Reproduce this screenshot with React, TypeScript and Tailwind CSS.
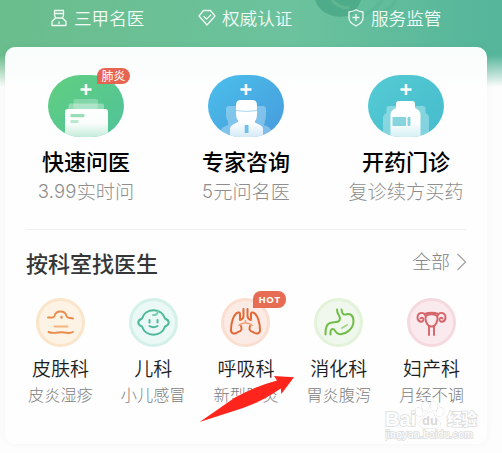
import type { ReactNode } from "react";

const badgeItems = [
  {
    label: "三甲名医",
    icon: (
      <>
        <path d="M4 1.5h9v4.500l-1 3h-7l-1-3zM4 4.500h9M5 9l-3.500 3.500v4h14v-4L12 9" />
        <path d="M8.500 12.500v2.500" />
      </>
    ),
    box: "w-[148px]",
  },
  {
    label: "权威认证",
    icon: <path d="M5 1.500h7l4.500 5.500-8 9-8-9zM5.200 7.200l2.800 2.900 4.500-4.300" />,
    box: "w-[149px]",
  },
  {
    label: "服务监管",
    icon: <path d="M8.500 .8c2.200 1.400 4.400 2 7 2.200v6c0 3.700-3 6-7 7.800-4-1.800-7-4.100-7-7.800V3c2.600-.2 4.800-.8 7-2.200zM8.500 5v7M5 8.500h7" />,
    box: "",
  },
];

const Oval = ({ id, from, to, children }: { id: string; from: string; to: string; children: ReactNode }) => (
  <svg width="76" height="62" viewBox="0 0 76 62">
    <defs>
      <linearGradient id={`${id}-bg`} x1="0" y1="0" x2="1" y2="1">
        <stop stopColor={from} />
        <stop offset="1" stopColor={to} />
      </linearGradient>
      <linearGradient id={`${id}-fade`} gradientUnits="userSpaceOnUse" x1="0" y1="32" x2="0" y2="64">
        <stop stopColor="#fff" />
        <stop offset=".5" stopColor="#fff" stopOpacity=".97" />
        <stop offset="1" stopColor="#fff" stopOpacity=".62" />
      </linearGradient>
      <clipPath id={`${id}-clip`}>
        <rect width="76" height="62" rx="33" ry="31" />
      </clipPath>
    </defs>
    <g clipPath={`url(#${id}-clip)`}>
      <rect width="76" height="62" fill={`url(#${id}-bg)`} />
      <path d="M38 9v11M32.500 14.500h11" stroke="#fff" strokeWidth="2.600" />
      {children}
    </g>
  </svg>
);

const services = [
  {
    title: "快速问医",
    number: "3.99",
    sub: "实时问",
    icon: (
      <Oval id="ask" from="#61cf80" to="#50c29a">
        <rect x="25.500" y="24" width="24.500" height="10" rx="2" fill="#fff" opacity=".25" />
        <rect x="20.500" y="28.500" width="35.500" height="10" rx="2" fill="#fff" opacity=".35" />
        <rect x="17" y="34" width="43" height="34" rx="3" fill="url(#ask-fade)" />
        <rect x="22.500" y="39" width="14" height="3.200" rx=".8" fill="#98dfb7" />
        <rect x="22.500" y="45" width="8" height="3" rx=".8" fill="#b8e9cf" />
      </Oval>
    ),
  },
  {
    title: "专家咨询",
    number: "5",
    sub: "元问名医",
    icon: (
      <Oval id="expert" from="#4bbfeb" to="#479bdc">
        <path d="M21 31h34q3 0 3 3v6q0 4-1 6l-1 4q7 2 7 6v6H13v-6q0-4 7-6v-4q-2-2-2-6v-6q0-3 3-3z" fill="#fff" opacity=".3" />
        <path d="M28 30q0-5 5-5h11q5 0 5 5v9q0 5-2 7v1.500l3 1.500q5 2 5 5v8H22v-8q0-3 4-5l4-2v-1.500q-2-2-2-6.500z" fill="url(#expert-fade)" />
        <path d="M28 35.500q10.500 2 21 0" stroke="#a5d5f3" strokeWidth="1" fill="none" />
        <rect x="36.700" y="50" width="3.800" height="8" fill="#72bde9" />
      </Oval>
    ),
  },
  {
    title: "开药门诊",
    number: "",
    sub: "复诊续方买药",
    icon: (
      <Oval id="clinic" from="#54cbd3" to="#46bbcd">
        <path d="M21 31h34q2.500 0 2.500 2.500V38q3.500 1.500 3.500 5v20H15V43q0-3.500 3.500-5v-4.500q0-2.500 2.500-2.500z" fill="#fff" opacity=".32" />
        <path d="M28 29q0-3 3-3h13q3 0 3 3v4q5 2 5.500 6v25H22.500V39q.5-4 5.500-6z" fill="url(#clinic-fade)" />
        <rect x="24.500" y="42" width="13.500" height="9" fill="#85d4de" />
        <rect x="39.500" y="42" width="3" height="9" rx="1" fill="#85d4de" />
      </Oval>
    ),
  },
];

const departments = [
  {
    name: "皮肤科",
    sub: "皮炎湿疹",
    circle: "border-[#fbe5ca] bg-[#fdf3e4]",
    icon: (
      <g stroke="#e98b4c" strokeWidth="1.900">
        <path d="M12 19.500h4.500q1.500 0 2-1.500c1.500-6 10.500-6 12 0q.5 1.500 2 1.700l4.500.8" />
        <path d="M12.500 34q3 1.200 7 .7 6-1 11 0 4 .7 6.500-.7" />
        <path d="M18.500 28.500h13" stroke="#f4b581" />
        <path d="M25.500 19v.5" strokeWidth="2.400" />
      </g>
    ),
  },
  {
    name: "儿科",
    sub: "小儿感冒",
    circle: "border-[#d3f1e8] bg-[#eaf8f6]",
    icon: (
      <g stroke="#4dba99" strokeWidth="2">
        <path d="M13 20.500c3-11 20-11 23 0 5 2 5 6 0 8-4 11-19 11-23 0-5-2-5-6 0-8z" />
        <path d="M20.500 22v2.500M28.500 22v2.500M20.500 28q4 2.500 8 0" />
        <path d="M29 13c0 2.500-2 4.500-5 4" stroke="#78cfb4" />
      </g>
    ),
  },
  {
    name: "呼吸科",
    sub: "新型肺炎",
    circle: "border-[#fadfd1] bg-[#fcebe4]",
    icon: (
      <g stroke="#e26936" strokeWidth="2">
        <path d="M22.500 11v7q0 3-3.500 4M26.500 11v7q0 3 3.500 4M19 21v-5q0-2-2-1.500c-5 2-7 11-7 17.500 0 4 4 4.500 7 2 4-1 4-3 3-6M30 21v-5q0-2 2-1.500c5 2 7 11 7 17.500 0 4-4 4.500-7 2-4-1-4-3-3-6" />
        <path d="M18 27.500q2-2.500 6.500-2.500t6.500 2.500M24.500 22.500v2.500" stroke="#f0a17c" strokeWidth="1.600" />
      </g>
    ),
  },
  {
    name: "消化科",
    sub: "胃炎腹泻",
    circle: "border-[#e3f3da] bg-[#f0f8ed]",
    icon: (
      <g stroke="#71bd49" strokeWidth="2">
        <path d="M23 11.500c0 5 3 6 3 9 0 4-4 3.500-8 4-5 .5-6.500 4-6.500 12M27.500 11.500c.5 4 1.500 5.500 4 5 5-1.500 8 1 8 6.500 0 8-8 14-14.500 13-4-1-4-5-6-5-2.500 0-2.500 2-2.500 5.500" />
        <path d="M28 30l5-3" stroke="#a4d58b" />
      </g>
    ),
  },
  {
    name: "妇产科",
    sub: "月经不调",
    circle: "border-[#f5d9de] bg-[#faeaed]",
    icon: (
      <g stroke="#d5656b" strokeWidth="1.900">
        <path d="M22 37v-9q-3.500-3-3.500-8c0-5 12-5 12 0q0 5-3.500 8v9" />
        <path d="M18.500 18c-1.500-4.500-7.500-4-8 1-.3 5 5 6 6 3 .3-2-2-3-3-1.500M30.500 18c1.500-4.500 7.500-4 8 1 .3 5-5 6-6 3-.3-2 2-3 3-1.500" />
        <path d="M17.500 16q7-2.500 14 0" />
        <path d="M22 28q2.500 1 5 0" />
      </g>
    ),
  },
];

export default function App() {
  return (
    <div className="relative h-[453px] w-[502px] overflow-hidden bg-[linear-gradient(180deg,transparent_55px,#fdfdfd_87px),linear-gradient(95deg,#6abd8c_0%,#6bc29d_55%,#50b39a_100%)] font-['Noto_Sans_CJK_SC',sans-serif]">
      <svg className="absolute left-[310px] top-0" width="130" height="20" fill="none">
        <path d="M5 0C9 12 22 19 37 16c7-2 11-8 14-16z" fill="#4fac8a" />
        <path d="M22 0c4 5 10 8 17 8" stroke="#5fb690" strokeWidth="3" />
        <path d="M49 17C61 13 68 7 72 0M63 17C76 13 82 7 86 0" stroke="#58b492" strokeWidth="4" opacity=".6" />
      </svg>

      <header className="relative flex h-[47px] pl-[50px] pt-[5px] text-white/90">
        {badgeItems.map((item) => (
          <div key={item.label} className={`flex h-[26px] items-center gap-[6px] ${item.box}`}>
            <svg width="18" height="18" viewBox="0 0 17 18" fill="none" stroke="currentColor" strokeWidth="1.300" strokeLinejoin="round">
              {item.icon}
            </svg>
            <span className="whitespace-nowrap text-[17.600px] font-[350] leading-[24px]">{item.label}</span>
          </div>
        ))}
      </header>

      <main className="relative ml-[5px] h-[397px] w-[482px] rounded-[10px] bg-[linear-gradient(180deg,#f9fdfc_0px,#fafdfc_20px,#fefefe_42px)] shadow-[0_0_10px_rgba(0,0,0,0.035)]">
        <section className="grid grid-cols-[160px_160px_160px] pl-px pt-7">
          {services.map((s) => (
            <div key={s.title} className="flex flex-col items-center">
              {s.icon}
              <h2 className="mt-[8px] whitespace-nowrap text-[22px] font-medium leading-[30px] text-black">{s.title}</h2>
              <p className="mt-[2px] flex whitespace-nowrap text-[19.200px] font-light leading-[28px] text-[#8e8e8e]">
                {s.number && <span className="font-['Inter',sans-serif] text-[18.500px] tracking-[0.2px]">{s.number}</span>}
                {s.sub}
              </p>
            </div>
          ))}
        </section>

        <hr className="mx-[21px] mt-[24px] border-[#f0f0f0]" />

        <div className="flex h-[66px] items-center justify-between pb-[3px] pl-[21px] pr-5">
          <h3 className="text-[22px] font-medium leading-[32px] text-[#363636]">按科室找医生</h3>
          <a className="flex items-center gap-[6px] text-[19px] font-light text-[#858585]">
            全部
            <svg width="11" height="18" fill="none" stroke="#a5a5a5" strokeWidth="1.300">
              <path d="M1.500 1l8 8-8 8" />
            </svg>
          </a>
        </div>

        <section className="ml-[9px] grid w-[464px] grid-cols-5 pt-[2px]">
          {departments.map((d) => (
            <div key={d.name} className="flex flex-col items-center">
              <div className={`flex h-[49px] w-[49px] items-center justify-center rounded-full border-[3px] ${d.circle}`}>
                <svg className="shrink-0" width="49" height="49" viewBox="0 0 49 49" fill="none" strokeLinecap="round" strokeLinejoin="round">
                  {d.icon}
                </svg>
              </div>
              <h4 className="mt-[7px] whitespace-nowrap text-[19px] font-[350] leading-[28px] text-[#1d1d1d]">{d.name}</h4>
              <p className="whitespace-nowrap text-[16.200px] font-light leading-[24px] text-[#808080]">{d.sub}</p>
            </div>
          ))}
        </section>
      </main>

      <span className="absolute left-[97px] top-[68px] flex h-[16px] w-[33px] items-center justify-center rounded-[8px] rounded-bl-none bg-[#e66552] text-[12px] leading-none text-white">肺炎</span>
      <span className="absolute left-[253px] top-[291px] flex h-[17px] w-[33px] items-center justify-center rounded-[8px] rounded-bl-none bg-[#e66c54] font-['Open_Sans',sans-serif] text-[9.500px] font-bold leading-none tracking-[0.500px] text-white">HOT</span>

      <svg className="absolute left-[385px] top-[397px]" width="100" height="50" fill="#fff" stroke="#dcdcdc" strokeWidth="1.600" paintOrder="stroke">
        <g strokeWidth="1">
          <ellipse cx="34" cy="15" rx="3.500" ry="4.500" transform="rotate(-25 34 15)" />
          <ellipse cx="40.500" cy="9" rx="3.500" ry="4.800" />
          <ellipse cx="49" cy="9" rx="3.500" ry="4.800" />
          <ellipse cx="55" cy="15" rx="3.500" ry="4.500" transform="rotate(25 55 15)" />
          <path d="M45 15c-4 0-5 4-9 8-4 4-1 8 4 8h10c5 0 7-5 3-8-4-3-4-8-8-8z" />
        </g>
        <text x="0" y="29" className="font-['Liberation_Sans',sans-serif] text-[20px] font-bold">Bai</text>
        <text x="37" y="28" className="font-['Liberation_Sans',sans-serif] text-[13px] font-bold" fill="#d8d8d8" stroke="none">du</text>
        <text x="62" y="28" textLength="30" className="font-['Noto_Sans_CJK_SC',sans-serif] text-[15.500px] font-bold">经验</text>
        <text x="0" y="41" textLength="88" className="font-['Liberation_Sans',sans-serif] text-[10.500px]">jingyan.baidu.com</text>
      </svg>

      <svg className="absolute left-[195px] top-[370px]" width="105" height="60">
        <path d="M4.700 52L40 27.500Q60 16.500 82 10.500L79 6 99 7.300 86.300 24 85.800 18.500Q68 31 48 38z" fill="#ff251c" />
      </svg>
    </div>
  );
}
